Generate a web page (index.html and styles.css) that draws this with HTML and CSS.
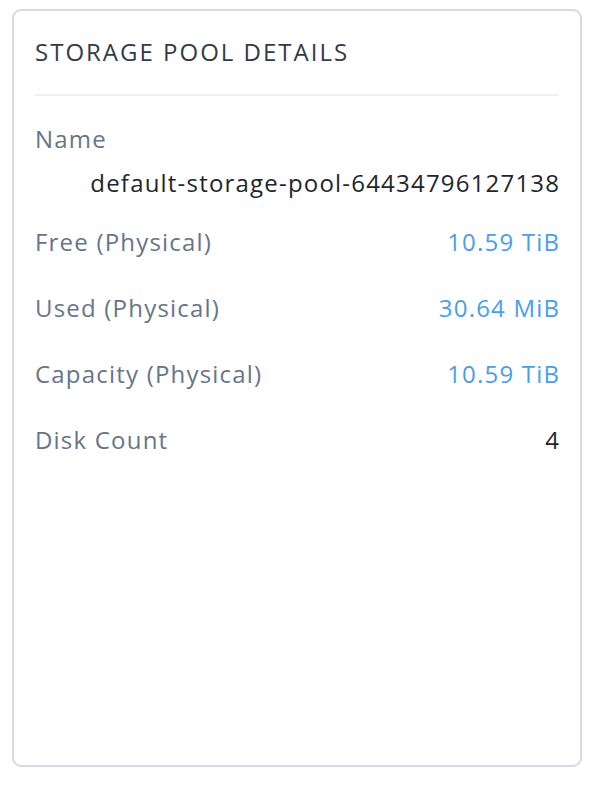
FILE: index.html
```html
<!DOCTYPE html>
<html>
<head>
<meta charset="utf-8">
<link rel="stylesheet" href="styles.css">
</head>
<body>
<div class="card">
  <div class="title">STORAGE POOL DETAILS</div>
  <div class="rows">
    <div class="row stacked">
      <div class="label">Name</div>
      <div class="value dark">default-storage-pool-64434796127138</div>
    </div>
    <div class="row">
      <div class="label">Free (Physical)</div>
      <div class="value blue">10.59 TiB</div>
    </div>
    <div class="row">
      <div class="label">Used (Physical)</div>
      <div class="value blue">30.64 MiB</div>
    </div>
    <div class="row">
      <div class="label">Capacity (Physical)</div>
      <div class="value blue">10.59 TiB</div>
    </div>
    <div class="row">
      <div class="label">Disk Count</div>
      <div class="value dark">4</div>
    </div>
  </div>
</div>
</body>
</html>
```
FILE: styles.css
```css
html, body {
  margin: 0;
  padding: 0;
  background: #ffffff;
}
body {
  font-family: "Open Sans", "Liberation Sans", sans-serif;
  padding: 9px 14px 0 12px;
}
.card {
  box-sizing: border-box;
  width: 570px;
  height: 758px;
  border: 2px solid #d6dbe1;
  border-radius: 9px;
  padding: 0 21px;
}
.title {
  font-size: 24px;
  color: #333b46;
  letter-spacing: 2px;
  padding: 26px 0 27px;
  border-bottom: 2px solid #eef0f2;
  line-height: 30px;
}
.rows {
  display: flex;
  flex-direction: column;
  padding-top: 28px;
}
.row {
  display: flex;
  justify-content: space-between;
  align-items: center;
  height: 66px;
  font-size: 24px;
  letter-spacing: 1.2px;
}
.row.stacked {
  flex-direction: column;
  align-items: stretch;
  height: auto;
  padding-bottom: 11px;
}
.row.stacked .value {
  text-align: right;
  margin-top: 14px;
}
.label {
  color: #66758a;
  line-height: 30px;
}
.value {
  line-height: 30px;
  margin-right: -1.2px;
}
.blue {
  color: #4a9ee8;
}
.dark {
  color: #22262c;
}
```
